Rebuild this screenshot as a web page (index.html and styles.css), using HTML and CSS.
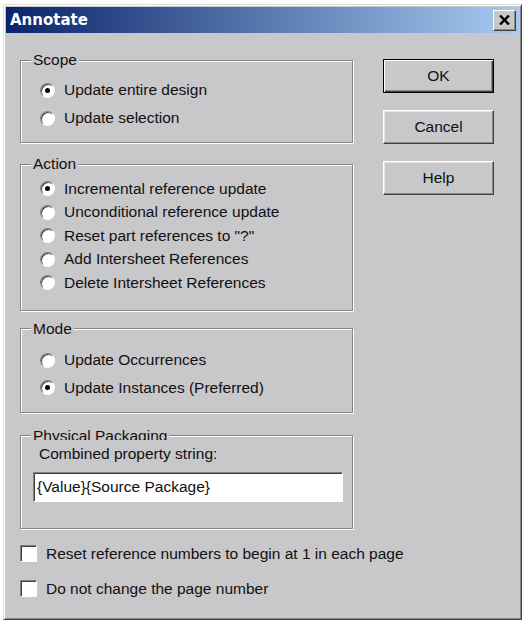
FILE: index.html
```html
<!DOCTYPE html>
<html lang="en">

<head>
  <meta charset="UTF-8">
  <meta name="viewport" content="width=device-width, initial-scale=1.0">
  <title>Annotate</title>
  <link rel="stylesheet" href="styles.css">
</head>

<body>
  <div class="window">
    <!-- Title bar -->
    <div class="titlebar">
      <span class="title">Annotate</span>
      <button class="close-btn" aria-label="Close">
        <svg width="11" height="10" viewBox="0 0 11 10">
          <path d="M1 0.5 L10 9.5 M10 0.5 L1 9.5" stroke="#000" stroke-width="2.4" fill="none" />
        </svg>
      </button>
    </div>

    <div class="dialog-body">
      <div class="main">
        <div class="groups">
          <!-- Scope -->
          <fieldset class="group group-scope">
            <legend>Scope</legend>
            <div class="option"><span class="radio is-checked"></span>Update entire design</div>
            <div class="option"><span class="radio"></span>Update selection</div>
          </fieldset>

          <!-- Action -->
          <fieldset class="group group-action">
            <legend>Action</legend>
            <div class="option"><span class="radio is-checked"></span>Incremental reference update</div>
            <div class="option"><span class="radio"></span>Unconditional reference update</div>
            <div class="option"><span class="radio"></span>Reset part references to "?"</div>
            <div class="option"><span class="radio"></span>Add Intersheet References</div>
            <div class="option"><span class="radio"></span>Delete Intersheet References</div>
          </fieldset>

          <!-- Mode -->
          <fieldset class="group group-mode">
            <legend>Mode</legend>
            <div class="option"><span class="radio"></span>Update Occurrences</div>
            <div class="option"><span class="radio is-checked"></span>Update Instances (Preferred)</div>
          </fieldset>

          <!-- Physical packaging -->
          <fieldset class="group group-packaging">
            <legend class="legend-clipped"><span>Physical Packaging</span></legend>
            <div class="packaging-body">
              <div class="field-label">Combined property string:</div>
              <div class="text-input">{Value}{Source Package}</div>
            </div>
          </fieldset>
        </div>

        <div class="buttons">
          <button class="btn btn-default">OK</button>
          <button class="btn">Cancel</button>
          <button class="btn">Help</button>
        </div>
      </div>

      <div class="checks">
        <div class="check-row"><span class="checkbox"></span>Reset reference numbers to begin at 1 in each page</div>
        <div class="check-row"><span class="checkbox"></span>Do not change the page number</div>
      </div>
    </div>
  </div>
</body>

</html>
```

FILE: styles.css
```css
body {
  margin: 0;
  background-color: #fff;
  font-family: "Liberation Sans", Arial, sans-serif;
  font-size: 15.5px;
  color: #111;
}

.window {
  box-sizing: border-box;
  width: 519px;
  height: 616px;
  margin: 4px 0 0 3px;
  padding: 2px;
  background-color: #c8c7c9;
  border: 1px solid;
  border-color: #dcdcdc #404040 #404040 #dcdcdc;
  box-shadow: inset 1px 1px #fff, inset -1px -1px #8a8a8a;
}

.titlebar {
  height: 26px;
  display: flex;
  align-items: center;
  justify-content: space-between;
  padding: 0 3px 0 4px;
  background: linear-gradient(to right, #0a246a, #a6caf0);
}

.title {
  font-family: "DejaVu Sans", sans-serif;
  font-weight: bold;
  font-size: 15px;
  color: #fff;
}

.close-btn {
  box-sizing: border-box;
  width: 23px;
  height: 21px;
  padding: 0;
  display: flex;
  align-items: center;
  justify-content: center;
  background-color: #c8c7c9;
  border: 1px solid;
  border-color: #fff #404040 #404040 #fff;
  box-shadow: inset -1px -1px #8a8a8a;
}

.dialog-body {
  padding: 18px 0 0 14px;
}

.main {
  display: flex;
  gap: 30px;
}

.groups {
  width: 333px;
}

/* Etched group box */
.group {
  margin: 0;
  padding: 0;
  border: 1px solid #888;
  box-shadow: inset 1px 1px #fff, 1px 1px #fff;
}

.group legend {
  margin-left: 10px;
  padding: 0 2px;
  line-height: 18px;
  background-color: #c8c7c9;
}

.legend-clipped {
  padding-bottom: 5px !important;
}

.legend-clipped span {
  display: block;
  height: 13px;
  overflow: hidden;
}

.group-scope {
  padding: 7px 0 10px;
}

.group-scope .option {
  height: 28px;
}

.group-action {
  margin-top: 12px;
  padding: 4px 0 15px;
}

.group-action .option {
  height: 23.5px;
}

.group-mode {
  margin-top: 9px;
  padding: 9px 0 10px;
}

.group-mode .option {
  height: 27.5px;
}

.group-packaging {
  margin-top: 14px;
  padding: 0 0 26px;
}

.packaging-body {
  padding-left: 12px;
}

.option {
  display: flex;
  align-items: center;
  gap: 9px;
  padding-left: 19px;
}

.radio {
  box-sizing: border-box;
  position: relative;
  width: 15px;
  height: 15px;
  border-radius: 50%;
  background-color: #fff;
  border: 1px solid;
  border-color: #808080 #fff #fff #808080;
  box-shadow: inset 1px 1px #404040;
}

.radio.is-checked::after {
  content: "";
  position: absolute;
  left: 4px;
  top: 4px;
  width: 5px;
  height: 5px;
  border-radius: 50%;
  background-color: #000;
}

.field-label {
  line-height: 18px;
  padding-left: 6px;
}

.text-input {
  box-sizing: border-box;
  width: 310px;
  height: 30px;
  margin-top: 9px;
  padding-left: 3px;
  display: flex;
  align-items: center;
  background-color: #fff;
  border: 1px solid;
  border-color: #808080 #fff #fff #808080;
  box-shadow: inset 1px 1px #404040;
}

.buttons {
  display: flex;
  flex-direction: column;
  gap: 17px;
  margin-top: 8px;
}

.btn {
  box-sizing: border-box;
  width: 111px;
  height: 34px;
  padding: 0;
  font-family: inherit;
  font-size: 15.5px;
  color: #111;
  background-color: #c8c7c9;
  border: 1px solid;
  border-color: #fff #404040 #404040 #fff;
  box-shadow: inset -1px -1px #8a8a8a, inset 1px 1px #e4e4e4;
}

.btn-default {
  border: 1px solid #000;
  box-shadow: inset 1px 1px #fff, inset -1px -1px #404040, inset -2px -2px #8a8a8a;
}

.checks {
  margin-top: 7.5px;
}

.check-row {
  height: 35px;
  display: flex;
  align-items: center;
  gap: 9px;
}

.checkbox {
  box-sizing: border-box;
  width: 17px;
  height: 17px;
  background-color: #fff;
  border: 1px solid;
  border-color: #808080 #fff #fff #808080;
  box-shadow: inset 1px 1px #404040;
}
```
